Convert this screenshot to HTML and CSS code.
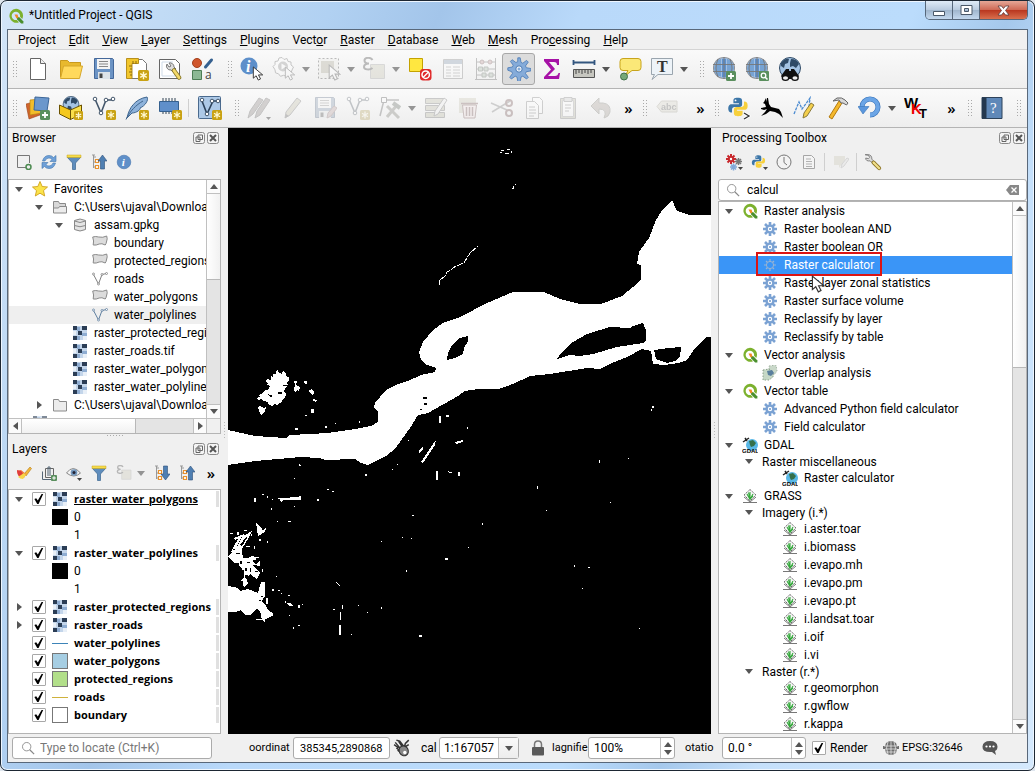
FILE: index.html
```html
<!DOCTYPE html>
<html lang="en">
<head>
<meta charset="utf-8">
<title>*Untitled Project - QGIS</title>
<link rel="stylesheet" href="styles.css">
</head>
<body>
<svg class="defs" width="0" height="0" aria-hidden="true">
<defs>
<symbol id="qgis" viewBox="0 0 16 16"><path d="M8 .8a7 7 0 1 0 3 13.500l-2.200-2.300A4.200 4.200 0 1 1 12 8.800l2.300 2.100A7 7 0 0 0 8 .8z" fill="#7cb12e"/><path d="M9 9l2.400.2 4 4.300v2h-2.300L9.200 11.500z" fill="#4a8f2e"/><path d="M6.500 6.500h3l1 3-2 1z" fill="#f08a24"/></symbol>
<symbol id="star6" viewBox="0 0 10 10"><rect width="10" height="10" rx="1.500" fill="#c9a213"/><path d="M5 1.500v7M2 3.200l6 3.600M8 3.200L2 6.800" stroke="#fff8d0" stroke-width="1.300"/></symbol>
<symbol id="plus" viewBox="0 0 10 10"><rect width="10" height="10" rx="1.500" fill="#5a8f5e"/><path d="M5 2v6M2 5h6" stroke="#fff" stroke-width="1.800"/></symbol>
<symbol id="arrowcur" viewBox="0 0 12 16"><path d="M1 1v12l3-2.600L6.300 15l2.400-1.200L6.500 9.500H11z" fill="#fff" stroke="#333" stroke-width="1"/></symbol>
<symbol id="new" viewBox="0 0 24 24"><path d="M4.500 1.500h10l5 5v16h-15z" fill="#fff" stroke="#666"/><path d="M14.500 1.500v5h5" fill="#eee" stroke="#666"/></symbol>
<symbol id="open" viewBox="0 0 24 24"><path d="M1.500 20V3.500h7l2 2h11V9" fill="#e8b92e" stroke="#c99a1e"/><path d="M1.500 21.500l3-12.500h19l-3 12.500z" fill="#ffd95c" stroke="#d6a72a"/></symbol>
<symbol id="save" viewBox="0 0 24 24"><path d="M2.500 1.500h18l1 1v19h-19z" fill="#6b93c4" stroke="#44689a"/><path d="M5 2h13v10H5z" fill="#f4f4f4"/><path d="M7 4.500h9M7 7h9M7 9.500h9" stroke="#888"/><path d="M6 15h12v7H6z" fill="#dde3e8"/><path d="M7.500 16.500h3V21h-3z" fill="#444"/></symbol>
<symbol id="layout" viewBox="0 0 24 24"><path d="M2.500 2.500h15l4 4v15h-19z" fill="#fff" stroke="#777"/><path d="M1.500 1.500h12v5H7v15H1.500z" fill="#f2c62c" stroke="#b8901c"/><path d="M4 9h3M5 12h2M4 15h3M5 18h2M8 4v3M11 4v3" stroke="#8a6a10"/><use href="#star6" x="13" y="13" width="11" height="11"/></symbol>
<symbol id="wrenchdoc" viewBox="0 0 24 24"><path d="M1.500 2.500h16l4 4v15h-20z" fill="#fff" stroke="#666"/><path d="M4 5h11M4 5v14h13" stroke="#cfdbe8" fill="none"/><path d="M9 7a4 4 0 0 0 4 6l2 2 3-3-2-2a4 4 0 0 0-5-4l2 3-2 1z" fill="#ddd" stroke="#777"/><path d="M16 13.500l5 7" stroke="#8a7a2a" stroke-width="4.500" stroke-linecap="round"/><path d="M16 13.500l5 7" stroke="#f3d96a" stroke-width="2.800" stroke-linecap="round"/></symbol>
<symbol id="style" viewBox="0 0 24 24"><circle cx="6" cy="6" r="4.500" fill="#d0562c" stroke="#a3401c"/><path d="M14.500 10l6-7" stroke="#35608f" stroke-width="3" stroke-linecap="round"/><path d="M1.500 13.500h9v9h-9z" fill="#8cb894" stroke="#4d7d55"/><text x="14" y="22" font-size="12" fill="#444" font-family="Open Sans">a</text></symbol>
<symbol id="ident" viewBox="0 0 24 24"><circle cx="9" cy="9" r="8.500" fill="#5d8fca"/><text x="6" y="15" font-size="16" font-style="italic" font-weight="bold" font-family="Liberation Serif" fill="#fff">i</text><use href="#arrowcur" x="12" y="9" width="12" height="15"/></symbol>
<symbol id="gear" viewBox="0 0 24 24"><path d="M10.800.8h2.400l.8 4.600 1.800.8 3.800-2.800 1.700 1.700-2.800 3.800.8 1.800 4.600.8v2.400l-4.600.8-.8 1.800 2.800 3.800-1.700 1.700-3.800-2.800-1.800.8-.8 4.600h-2.400l-.8-4.600-1.800-.8-3.800 2.800-1.700-1.700 2.800-3.800-.8-1.800L.8 13.200v-2.400l4.600-.8.800-1.800-2.800-3.800 1.700-1.700 3.800 2.800 1.800-.8z" fill="#85abd9" stroke="#4779b5" stroke-width=".8"/><circle cx="12" cy="12" r="3.200" fill="#f2f5f9" stroke="#4779b5"/><circle cx="12" cy="12" r="1.500" fill="#85abd9"/></symbol>
<symbol id="gearact" viewBox="0 0 24 24"><path d="M10 .5l2 2 3-1 1 3 3 .5v3l2.500 2-1.500 3-1 3-3 .8-1.500 2.500-3-1-3 1-2-2.500-3-1-.5-3L1 9.500l2-2V4.500L6 4l1-3z" fill="#fff" stroke="#555"/><circle cx="11" cy="9.500" r="5" fill="#888"/><path d="M9.500 6.500l5 3-5 3z" fill="#fff"/><use href="#arrowcur" x="12" y="9" width="12" height="15"/></symbol>
<symbol id="select" viewBox="0 0 24 24"><path d="M1.500 1.500h20v20h-20z" fill="#e9e9e0" stroke="#333" stroke-dasharray="2 2"/><path d="M4 4h13v12H4z" fill="#a8a078"/><use href="#arrowcur" x="11" y="7" width="13" height="17"/></symbol>
<symbol id="eps" viewBox="0 0 24 24"><path d="M8.500 7.500h14v14h-14z" fill="#c9c59d" stroke="#999"/><path d="M10.500 3C9 0 2.500 0 2.500 3.500 2.500 6 5 6.500 7 6.500 4.500 6.500 2 7.500 2 10s5.500 3.500 8.500 1" fill="none" stroke="#333" stroke-width="2"/></symbol>
<symbol id="desel" viewBox="0 0 24 24"><path d="M1.500 1.500h13v13h-13z" fill="#ffe740" stroke="#c4a200"/><rect x="12" y="12" width="11.500" height="11.500" rx="3" fill="#e02a2a"/><circle cx="17.700" cy="17.700" r="3.700" fill="none" stroke="#fff" stroke-width="1.500"/><path d="M15 20.500l5.500-5.500" stroke="#fff" stroke-width="1.500"/></symbol>
<symbol id="table" viewBox="0 0 24 24"><path d="M2.500 2.500h19v19h-19z" fill="#fff" stroke="#777"/><path d="M3 3h18v4H3z" fill="#6b93c4"/><path d="M5 10h5M12 10h7M5 13h5M12 13h7M5 16h5M12 16h7M5 19h5M12 19h7" stroke="#888"/></symbol>
<symbol id="abacus" viewBox="0 0 24 24"><path d="M2.500 1v22M21.500 1v22M2 5h20M2 12h20M2 18h20M1 22.500h22" stroke="#555"/><circle cx="8" cy="5" r="2" fill="#d88" stroke="#844"/><circle cx="16" cy="5" r="2" fill="#d88" stroke="#844"/><path d="M4.500 10h4v4h-4zM10 10h4v4h-4zM8 16h4v4H8zM15 16h4v4h-4z" fill="#9b9" stroke="#565"/></symbol>
<symbol id="sigma" viewBox="0 0 24 24"><path d="M4 2h15v6h-2c0-2-1-3-3-3H9l6 7-7 7h7c2 0 3-1 3.500-3H20l-1 6H4v-2l7-7.500L4 4z" fill="#a612a6"/></symbol>
<symbol id="ruler" viewBox="0 0 24 24"><path d="M1 5.500h22M1.500 3v5M22.500 3v5" stroke="#33567f" stroke-width="1.800"/><path d="M1.500 12.500h21v8h-21z" fill="#c7c7c0" stroke="#555"/><path d="M4 13v4M7 13v3M10 13v4M13 13v3M16 13v4M19 13v3" stroke="#444"/></symbol>
<symbol id="tip" viewBox="0 0 24 24"><path d="M5 1.500h15q3 0 3 3v6q0 3-3 3h-6L7 19l3-5.500H5q-3 0-3-3v-6q0-3 3-3z" fill="#fbe878" stroke="#c8a41c"/><circle cx="6" cy="19.500" r="3.500" fill="#76a878" stroke="#41704a"/></symbol>
<symbol id="textann" viewBox="0 0 24 24"><path d="M1.500 1.500h21v16H8L2 22.500l2.500-5h-3z" fill="#edf3f8" stroke="#9aa5ae"/><text x="7" y="15" font-size="16" font-family="Liberation Serif" font-weight="bold" fill="#333">T</text></symbol>
<symbol id="globe" viewBox="0 0 24 24"><circle cx="12" cy="11" r="11" fill="#8b8f96"/><circle cx="12" cy="11" r="10" fill="#e6edf5"/><path d="M5 3.500C1 9 1 14 5 18.500L9 20V1.500zM19 3.500c4 5.500 4 10 0 15L15 20V1.500z" fill="#77a3d3"/><path d="M9.500 1.500h5v19h-5z" fill="#5e92cf"/><path d="M1 7.500h22M1 14.500h22M12 0v22M6 2q-4 9 0 18M18 2q4 9 0 18" fill="none" stroke="#777" stroke-width=".9"/></symbol>
<symbol id="globeadd" viewBox="0 0 24 24"><use href="#globe" width="24" height="24"/><use href="#plus" x="14" y="14" width="10" height="10"/></symbol>
<symbol id="globefind" viewBox="0 0 24 24"><use href="#globe" width="24" height="24"/><rect x="14" y="14" width="10" height="10" rx="1" fill="#5a8f5e"/><circle cx="18.500" cy="18.500" r="2.300" fill="none" stroke="#fff" stroke-width="1.300"/><path d="M20 20l2.500 2.500" stroke="#fff" stroke-width="1.500"/></symbol>
<symbol id="earth" viewBox="0 0 24 24"><circle cx="12" cy="11" r="10.500" fill="#a4c3e3" stroke="#2f4a66"/><path d="M3 6q4-5 8-4l-1 4-3 1-1 4-3-2zM13 2q6 0 8 5l-3 4-3-2-3 1 0-4zM8 13l4 1 1 3-3 4-3-4z" fill="#2f4a66"/></symbol>
<symbol id="binoc" viewBox="0 0 24 24"><use href="#earth" width="24" height="24"/><path d="M8 12h3v2h2v-2h3l5 7-2 3H5l-2-3z" fill="#111"/><ellipse cx="7.500" cy="21" rx="3.200" ry="2.300" fill="#eee" stroke="#111" stroke-width="1.300"/><ellipse cx="17" cy="21" rx="3.200" ry="2.300" fill="#eee" stroke="#111" stroke-width="1.300"/></symbol>
<symbol id="dsm" viewBox="0 0 24 24"><path d="M0 8l11-3 3 14-11 4z" fill="#d0642c" stroke="#9c4518" stroke-width=".6"/><path d="M4 4l10-1 2 14-12 2z" fill="#f2bd2a" stroke="#b98512" stroke-width=".7"/><path d="M9 1l14 1-2 13-13-1z" fill="#6b97cc" stroke="#3c6698"/><use href="#plus" x="14" y="14" width="10" height="10"/></symbol>
<symbol id="gpkg" viewBox="0 0 24 24"><use href="#earth" x="3" y="0" width="18" height="18"/><path d="M.5 9l11 5v9.500L.5 18z" fill="#f4c81e" stroke="#6b5200"/><path d="M11.500 14l11-5v9l-11 5.500z" fill="#fadf4c" stroke="#6b5200"/><use href="#star6" x="15" y="15" width="9" height="9"/></symbol>
<symbol id="vec" viewBox="0 0 24 24"><path d="M3 3l6 14 5-13h7" fill="none" stroke="#43566b" stroke-width="1.600"/><g fill="#fff" stroke="#43566b"><circle cx="3" cy="3" r="1.800"/><circle cx="9" cy="17" r="1.800"/><circle cx="14" cy="4" r="1.800"/><circle cx="21" cy="3" r="1.800"/></g></symbol>
<symbol id="vecnew" viewBox="0 0 24 24"><use href="#vec" width="24" height="24"/><use href="#star6" x="14" y="14" width="10" height="10"/></symbol>
<symbol id="feather" viewBox="0 0 24 24"><path d="M2 22C4 12 10 3 22 1c2 3-2 9-7 11 1 1-3 5-8 5z" fill="#8db2db" stroke="#3f658e"/><path d="M1 23.500C5 15 11 9 18 5" stroke="#3f658e" fill="none"/><use href="#star6" x="14" y="14" width="10" height="10"/></symbol>
<symbol id="chip" viewBox="0 0 24 24"><path d="M5 2v16M8 2v16M11 2v16M14 2v16M17 2v16" stroke="#345"/><path d="M1.500 5.500h19v10h-19z" fill="#5f8fca" stroke="#35608f"/><use href="#star6" x="14" y="14" width="10" height="10"/></symbol>
<symbol id="virt" viewBox="0 0 24 24"><rect x=".5" y=".5" width="22" height="22" rx="1" fill="#adc9e7" stroke="#4a6a8e"/><path d="M4 5l5 13 6-13h5" fill="none" stroke="#2d425a" stroke-width="1.600"/><g fill="#fff" stroke="#43566b"><circle cx="4" cy="4" r="1.800"/><circle cx="9" cy="18" r="1.800"/><circle cx="14" cy="5" r="1.800"/><circle cx="20" cy="5" r="1.800"/></g><use href="#star6" x="14" y="14" width="10" height="10"/></symbol>
<symbol id="pencil" viewBox="0 0 24 24"><path d="M5 22l1-6L17 2l4 3L10 19z" fill="#c5bd8c" stroke="#666"/><path d="M5 22l1-4 3 2z" fill="#555"/></symbol>
<symbol id="pencils" viewBox="0 0 24 24"><path d="M1 22l2-7L12 2l4 2L6 18zM8 22l2-7L19 2l4 2L13 19z" fill="#8a7b76" stroke="#555"/><path d="M19 21h5l-2.500 3z" fill="#000"/></symbol>
<symbol id="saveed" viewBox="0 0 24 24"><use href="#save" width="24" height="24"/><path d="M14 22l1-5 6-7 3 2-6 8z" fill="#c99" stroke="#966"/></symbol>
<symbol id="node" viewBox="0 0 24 24"><path d="M2 20L6 4h15" fill="none" stroke="#555" stroke-width="1.500"/><path d="M3.500 1.500h5v5h-5z" fill="#fff" stroke="#444"/><path d="M9 21L19 9M9 10l12 12" stroke="#776" stroke-width="3"/><path d="M15 7l7 5" stroke="#565" stroke-width="4"/></symbol>
<symbol id="rows" viewBox="0 0 24 24"><path d="M1.500 2.500h19v5h-19zM1.500 9.500h19v5h-19zM1.500 16.500h19v5h-19z" fill="#bbb98f" stroke="#666"/><path d="M10 20l1-5L20 2l3 2-9 14z" fill="#eee" stroke="#666"/></symbol>
<symbol id="trash" viewBox="0 0 24 24"><path d="M2 2h17v15H2z" fill="#c9c4a0"/><path d="M5.500 9h14l-1.500 13H7z" fill="#fdd" stroke="#844"/><path d="M4 7.500h17M9.500 11v9M12.500 11v9M15.500 11v9" stroke="#844" stroke-width="1.500"/></symbol>
<symbol id="cut" viewBox="0 0 24 24"><path d="M1 7l16 7M2 16L20 5" stroke="#777" stroke-width="1.600"/><g fill="none" stroke="#844" stroke-width="2"><circle cx="19" cy="7" r="3"/><circle cx="19" cy="17" r="3"/></g></symbol>
<symbol id="copy" viewBox="0 0 24 24"><path d="M9.500 1.500h7l3 3v13h-10z" fill="#fff" stroke="#777"/><path d="M3.500 5.500h8l4 4v13h-12z" fill="#fff" stroke="#777"/><path d="M6 11h6M6 14h7M6 17h7M6 20h5" stroke="#777"/></symbol>
<symbol id="paste" viewBox="0 0 24 24"><path d="M4.500 2.500h15v20h-15z" fill="#bbb98f" stroke="#777"/><path d="M6.500 4.500h11v16h-11z" fill="#fff" stroke="#999"/><path d="M8 1.500h8v4H8z" fill="#ccc" stroke="#777"/><path d="M9 9h6M9 12h6M9 15h4" stroke="#777"/></symbol>
<symbol id="undo" viewBox="0 0 24 24"><path d="M10 2v5h4q8 1 7 9-1 5-6 6 4-9-5-9v5L2 10z" fill="#a98" stroke="#776"/></symbol>
<symbol id="abc" viewBox="0 0 24 24"><path d="M2 10.500L6.500 5H22v11H6.500z" fill="#d8d3b8" stroke="#a09a7c"/><text x="6" y="13.500" font-size="9" font-weight="bold" font-family="Liberation Sans" fill="#555">abc</text></symbol>
<symbol id="py" viewBox="0 0 24 24"><path d="M12 2c-5 0-5 1.500-5 4v2h6v1H5c-3 0-4 3-3.500 6 .5 2.500 2 3 4 3V15q0-3 3-3h5q3 0 3-3V6c0-3-1-4-4.500-4z" fill="#3c76a8"/><path d="M12 22c5 0 5-1.500 5-4v-2h-6v-1h8c3 0 3.500-2 3.500-5 0-2.500-1-4-4-4v3q0 3-3 3h-5q-3 0-3 3v3c0 3 1 4 4.500 4z" fill="#f7d03c"/><circle cx="9.300" cy="4.800" r="1" fill="#fff"/></symbol>
<symbol id="pycon" viewBox="0 0 24 24"><use href="#py" x="0" y="0" width="22" height="22"/><path d="M17 17l5 3-5 3" fill="none" stroke="#fff" stroke-width="3"/><path d="M17 17l5 3-5 3" fill="none" stroke="#333" stroke-width="1.300"/></symbol>
<symbol id="deer" viewBox="0 0 24 24"><path d="M6 2l1 4 0-4h1l1 6 2 3 8 2 2 3 2 6-4-4-4-2-5-1-4 3-5 2 4-4 2-3-3 1-3-1v-1l5-1-1-3-2-1 1-1z" fill="#000"/></symbol>
<symbol id="adv" viewBox="0 0 24 24"><path d="M1 18l5-12 3 7 8-11-1 9" fill="none" stroke="#4a8ad0" stroke-dasharray="3 1" stroke-width="1.300"/><path d="M10 22l1-5 7-10 3 2-7 11z" fill="#f4cf4c" stroke="#8a7a3a"/></symbol>
<symbol id="hammer" viewBox="0 0 24 24"><path d="M13 5L3 21l3 2 10-16z" fill="#f4b82c" stroke="#b37a0e"/><path d="M7 5l4-3q5-1 8 2l3 3-1.500 2-3.500-2-2 0-2-3z" fill="#d8d8d8" stroke="#666"/></symbol>
<symbol id="reload" viewBox="0 0 24 24"><path d="M4 11A8 8 0 1 1 12 19" fill="none" stroke="#3873b9" stroke-width="5"/><path d="M4 11A8 8 0 1 1 12 19" fill="none" stroke="#6ba5e6" stroke-width="3.800"/><path d="M0 10.500h11L5 18z" fill="#5b97dd" stroke="#3873b9" stroke-width=".6"/></symbol>
<symbol id="wkt" viewBox="0 0 24 24"><g font-family="Liberation Sans" font-weight="bold"><text x="0" y="12" font-size="15" fill="#000">W</text><text x="7" y="18" font-size="15" fill="#e00">K</text><text x="15" y="22" font-size="13" fill="#000">T</text></g></symbol>
<symbol id="help" viewBox="0 0 24 24"><path d="M2 1.500h20v21H2z" fill="#5f88b8" stroke="#2d425a"/><path d="M2 1.500h4.500v21H2z" fill="#24384f"/><text x="10" y="17" font-size="15" font-family="Liberation Serif" fill="#fff">?</text></symbol>
<symbol id="addlay" viewBox="0 0 16 16"><path d="M11 13.500H1.500v-12h12V9" fill="none" stroke="#777"/><circle cx="12.500" cy="13" r="2.500" fill="#eee" stroke="#4c8a50" stroke-width="1.500"/></symbol>
<symbol id="refresh" viewBox="0 0 16 16"><path d="M1.500 7Q3 1.500 8 1.500q3 0 4.500 2L15 1.500v6H9l2-2q-1-1.500-3-1.500-3 0-4 3zM14.500 9q-1.500 5.500-6.500 5.500-3 0-4.500-2L1 14.500v-6h6l-2 2q1 1.500 3 1.500 3 0 4-3z" fill="#6fa0d8" stroke="#3f75ad" stroke-width=".6"/></symbol>
<symbol id="funnel" viewBox="0 0 16 16"><path d="M1 3h14L9.500 9v6.500h-3V9z" fill="#5f8dbd" stroke="#3b658f" stroke-width=".7"/><path d="M1 1h14v2.500H1z" fill="#f6dc4a" stroke="#c9a51e" stroke-width=".5"/></symbol>
<symbol id="coll" viewBox="0 0 16 16"><path d="M2.500 1v13M2.500 3H5M2.500 8H5M2.500 13H5M1 1h3" stroke="#999" fill="none"/><path d="M4.500 5.500h3v3h-3zM4.500 11.500h3v3h-3z" fill="#fff" stroke="#e8912c" stroke-width="1.200"/><path d="M9.500 15V7H7l4.500-6L16 7h-2.500v8z" fill="#4f7fb2" stroke="#2d4f78" stroke-width=".6"/></symbol>
<symbol id="expand" viewBox="0 0 16 16"><path d="M2.500 1v13M2.500 3H5M2.500 8H5M2.500 13H5M1 1h3" stroke="#999" fill="none"/><path d="M4.500 5.500h3v3h-3zM4.500 11.500h3v3h-3z" fill="#fff" stroke="#e8912c" stroke-width="1.200"/><path d="M9.500 1v8H7l4.500 6L16 9h-2.500V1z" fill="#4f7fb2" stroke="#2d4f78" stroke-width=".6"/></symbol>
<symbol id="info" viewBox="0 0 16 16"><circle cx="8" cy="8" r="6.800" fill="#5f8fc8" stroke="#4474ad" stroke-width=".6"/><text x="5.800" y="12" font-size="11" font-style="italic" font-weight="bold" font-family="Liberation Serif" fill="#fff">i</text></symbol>
<symbol id="star" viewBox="0 0 16 16"><path d="M8 .5l2.200 5 5.300.5-4 3.600 1.200 5.400L8 12.200 3.300 15l1.200-5.400L.5 6l5.300-.5z" fill="#fbe34a" stroke="#d0a21c" stroke-width=".9"/></symbol>
<symbol id="folder" viewBox="0 0 16 16"><path d="M1.500 14V2.500h5l1 2h7V14z" fill="#ececec" stroke="#8a8a8a"/></symbol>
<symbol id="folderopen" viewBox="0 0 16 16"><path d="M1.500 12V2.500h5l1 2h6V7" fill="#d8d8d8" stroke="#8a8a8a"/><path d="M1.500 14V9h5l1-1.500h7V14z" fill="#ececec" stroke="#8a8a8a"/></symbol>
<symbol id="db" viewBox="0 0 16 16"><path d="M2.500 3.500v9q5.500 3 11 0v-9q-5.500-3-11 0z" fill="#e4e4e4" stroke="#888"/><path d="M2.500 4q5.500 3 11 0M2.500 8.500q5.500 2.500 11 0" fill="none" stroke="#888"/></symbol>
<symbol id="poly" viewBox="0 0 16 16"><path d="M.7 2q3-1 6 0 4 1 8-1 1 3 0 5-.5 3-1.500 4-3.500-2-6-1-3 1.500-6 1 1-4-.5-8z" fill="#dcdcdc" stroke="#8a8a8a"/></symbol>
<symbol id="line" viewBox="0 0 16 16"><path d="M1.500 3.500l5 9.500L10 3.500l4.500-1" fill="none" stroke="#808080"/><g fill="#fff" stroke="#808080" stroke-width=".8"><circle cx="1.500" cy="3" r="1"/><circle cx="6.500" cy="13" r="1"/><circle cx="10" cy="3.500" r="1"/><circle cx="14.500" cy="2.500" r="1"/></g></symbol>
<symbol id="lineblue" viewBox="0 0 16 16"><path d="M1.500 3.500l5 9.500L10 3.500l4.500-1" fill="none" stroke="#5f7f9f"/><g fill="#fff" stroke="#5f7f9f" stroke-width=".8"><circle cx="1.500" cy="3" r="1"/><circle cx="6.500" cy="13" r="1"/><circle cx="10" cy="3.500" r="1"/><circle cx="14.500" cy="2.500" r="1"/></g></symbol>
<symbol id="raster" viewBox="0 0 14 14"><path d="M0 0h14v14H0z" fill="#c3d5ea"/><path d="M0 0h4v4H0zM9 0h5v4H9zM5 5h4v4H5zM0 10h4v4H0z" fill="#2b3d55"/><path d="M4 1h3v4H4zM9 7h5v3H9zM4 10h3v4H4z" fill="#8fadd2"/><path d="M0 5h3v4H0zM10 10h4v4h-4z" fill="#e8eff7"/></symbol>
<symbol id="minigear" viewBox="0 0 16 16"><g stroke="#7ba2d3" stroke-width="2.600"><path d="M8 1v14M1 8h14M3 3l10 10M13 3L3 13"/></g><circle cx="8" cy="8" r="4.600" fill="#7ba2d3"/><circle cx="8" cy="8" r="2.200" fill="#fff"/><circle cx="8" cy="8" r="1" fill="#6a95ca"/></symbol>
<symbol id="gearsel" viewBox="0 0 16 16"><g stroke="#9ab4d2" stroke-width="1.200"><path d="M8 2v12M2 8h12M4 4l8 8M12 4l-8 8"/></g><circle cx="8" cy="8" r="3.600" fill="#3a95f7" stroke="#9ab4d2"/></symbol>
<symbol id="overlap" viewBox="0 0 16 16"><path d="M7 1l7-1 1 6-3 4-5-2z" fill="#c9d8c9" stroke="#a5b5a5" stroke-dasharray="1.500 1.500"/><path d="M1 5l6-1 4 3v5l-4 3-6 0z" fill="#c6d8c6" stroke="#8aa08a" stroke-dasharray="1.500 1.500"/><path d="M5 6l5-1 2 3-3 3-3-1z" fill="#5a7f9d"/></symbol>
<symbol id="gdal" viewBox="0 0 16 16"><circle cx="10" cy="8" r="6" fill="#58b7e6"/><path d="M7 4l4-1 3 3-2 3-3 1-1-2z" fill="#35704a"/><path d="M1 5l6-4M3 1l2 3" stroke="#222" stroke-width="1.500"/><text x="0" y="15.500" font-size="6" font-weight="bold" font-family="Liberation Sans" fill="#000">GDAL</text></symbol>
<symbol id="grass" viewBox="0 0 16 16"><path d="M8 1.500l6 5.500-6 6-6-6z" fill="#f7f7f7" stroke="#666" stroke-dasharray="1.500 .8"/><path d="M2 9l6 5 6-5M1 14.500h14" fill="none" stroke="#777"/><path d="M8 12V4M8 11.500L5 6M8 11.500L11 6M8 11L6.500 4.500M8 11l3-3" stroke="#35a83c" stroke-width="1.100"/></symbol>
<symbol id="gears" viewBox="0 0 18 18"><g stroke="#c8282c" stroke-width="2"><path d="M6 1v10M1 6h10M2.500 2.500l7 7M9.500 2.500l-7 7"/></g><circle cx="6" cy="6" r="3" fill="#c8282c"/><circle cx="6" cy="6" r="1.200" fill="#fff"/><g stroke="#777" stroke-width="1.500"><path d="M13.500 5v7M10 8.500h7M11 6l5 5M16 6l-5 5"/></g><g stroke="#83a9d8" stroke-width="1.500"><path d="M8.500 10.500v7M5 14h7M6 11.500l5 5M11 11.500l-5 5"/></g><path d="M13 14h5l-2.500 3z" fill="#444"/></symbol>
<symbol id="pymenu" viewBox="0 0 18 18"><use href="#py" x="1" y="1" width="15" height="15"/><path d="M13 14h5l-2.500 3z" fill="#444"/></symbol>
<symbol id="clock" viewBox="0 0 16 16"><circle cx="8" cy="8" r="7" fill="#f3f3f3" stroke="#777"/><path d="M8 3v5.500l3 2.500" fill="none" stroke="#777"/></symbol>
<symbol id="doc" viewBox="0 0 16 16"><path d="M2.500 1.500h8l3 3v10h-11z" fill="#f7f7f7" stroke="#888"/><path d="M5 5h5M5 7.500h6M5 10h6M5 12.500h6" stroke="#999"/></symbol>
<symbol id="editb" viewBox="0 0 16 16"><path d="M1 2h11v9H8l-2 3v-3H1z" fill="#c9c4a0"/><path d="M8 14l1-4 5-6 2 1-5 7z" fill="#ddd" stroke="#999"/></symbol>
<symbol id="wrench" viewBox="0 0 16 16"><path d="M1 1.500l3 .5 1 2-1 1-2.500-.5q0 3 4 2.500l2 2 1.500-1.500-2-2q0-4-3.500-4z" fill="#ddd" stroke="#777" stroke-width=".8"/><path d="M8.500 8.500l5 5" stroke="#8a7020" stroke-width="3.500" stroke-linecap="round"/><path d="M8.500 8.500l5 5" stroke="#f0df8a" stroke-width="2" stroke-linecap="round"/></symbol>
<symbol id="brush" viewBox="0 0 16 16"><path d="M8 9l6-7 1.500 1.500L10 11z" fill="#f2b83a" stroke="#b37a1a" stroke-width=".6"/><path d="M1 6l4-1 5 4-2 4q-6 1-7-7z" fill="#f0783c"/><path d="M1 5l4 1 2 3-3 3q-3-2-3-7z" fill="#e03c3c"/><path d="M2 12l6-4 2 2-3 4q-3 0-5-2z" fill="#f8d648"/></symbol>
<symbol id="group" viewBox="0 0 16 16"><path d="M4.500 3.500h8v9h-8z" fill="none" stroke="#666"/><path d="M1.500 6.500v8h9M7 2v9M7 2h2v9" fill="none" stroke="#567"/><use href="#plus" x="10" y="10" width="6" height="6"/></symbol>
<symbol id="eye" viewBox="0 0 16 16"><path d="M.5 8Q7-1 14.500 8 8 14 .5 8z" fill="#f4f4f4" stroke="#888"/><circle cx="8" cy="7.500" r="3.300" fill="#7397bd"/><circle cx="8" cy="7.500" r="1.500" fill="#223"/><path d="M11 13h5l-2.500 3z" fill="#444"/></symbol>
<symbol id="float" viewBox="0 0 12 12"><rect x=".5" y=".5" width="11" height="11" rx="2" fill="#f4f4f4" stroke="#888"/><path d="M5 3h4.500v4.500H5zM3 5h4v4.500H3z" fill="#f4f4f4" stroke="#666"/></symbol>
<symbol id="close" viewBox="0 0 12 12"><rect x=".5" y=".5" width="11" height="11" rx="2" fill="#f4f4f4" stroke="#888"/><path d="M3 3l6 6M9 3L3 9" stroke="#555" stroke-width="2"/></symbol>
<symbol id="lens" viewBox="0 0 16 16"><circle cx="6.500" cy="6.500" r="4.800" fill="none" stroke="#888"/><path d="M10 10l5 5" stroke="#888" stroke-width="1.400"/></symbol>
<symbol id="mouse" viewBox="0 0 16 16"><path d="M3 1l3 1 4 5 1-3 3-3M1 5l4 3M2 3l5 6M5 2l4 6M3 8l4 3M4 10l3 2M9 8l5-3" stroke="#333" stroke-width="1.300" fill="none"/><ellipse cx="9.500" cy="10.500" rx="4" ry="4.500" transform="rotate(-30 9.500 10.500)" fill="#888" stroke="#333"/><circle cx="10.500" cy="12" r="1.500" fill="#fff"/></symbol>
<symbol id="lock" viewBox="0 0 14 16"><path d="M3.500 8V4.500q0-3.500 3.500-3.500t3.500 3.500V8" fill="none" stroke="#777" stroke-width="1.500"/><rect x="1" y="7" width="12" height="8.500" rx="1" fill="#5a5a5a"/></symbol>
<symbol id="crs" viewBox="0 0 16 16"><path d="M3 3q5-4 10 0l1 3h2v3h-2l-1 4q-5 4-10 0L2 9H0V6h2z" fill="#6f6f6f"/><path d="M1 6h14M2 9h12M3 12h10M8 1v14M5 2q-3 6 0 12M11 2q3 6 0 12" fill="none" stroke="#f0f0f0" stroke-width=".7"/></symbol>
<symbol id="chat" viewBox="0 0 16 16"><path d="M8 1q7 0 7.500 5.500Q15.500 10 13 11l1 4-4-3Q0 12.500.5 6.500 1 1 8 1z" fill="#555"/><g fill="#fff"><circle cx="4.500" cy="6.500" r="1.100"/><circle cx="8" cy="6.500" r="1.100"/><circle cx="11.500" cy="6.500" r="1.100"/></g></symbol>
</defs>
</svg>

<div class="window">
<header class="titlebar">
  <svg class="i16"><use href="#qgis"/></svg>
  <h1 class="title">*Untitled Project - QGIS</h1>
  <div class="winbtns">
    <button class="wb" aria-label="Minimize"><svg viewBox="0 0 13 11"><path d="M.5 6.500h11v4H.5z" fill="#fff" stroke="#4a5868"/></svg></button>
    <button class="wb" aria-label="Maximize"><svg viewBox="0 0 13 11"><path d="M1 .5h11v9H1zM4.500 3.500v3h4v-3z" fill="#fff" fill-rule="evenodd" stroke="#4a5868"/></svg></button>
    <button class="wb wb-close" aria-label="Close"><svg viewBox="0 0 13 11"><path d="M1 1h3.500L6.500 3.500 8.500 1H12L8.500 5.500 12 10H8.500L6.500 7.500 4.500 10H1l3.500-4.500z" fill="#fff" stroke="#5b3a3a" stroke-width=".8"/></svg></button>
  </div>
</header>

<div class="client">
<nav class="menubar">
  <button>Pro<u>j</u>ect</button><button><u>E</u>dit</button><button><u>V</u>iew</button><button><u>L</u>ayer</button><button><u>S</u>ettings</button><button><u>P</u>lugins</button><button>Vect<u>o</u>r</button><button><u>R</u>aster</button><button><u>D</u>atabase</button><button><u>W</u>eb</button><button><u>M</u>esh</button><button>Pro<u>c</u>essing</button><button><u>H</u>elp</button>
</nav>

<div class="toolbar">
  <i class="grip grip-first"></i>
  <button class="tb" aria-label="New"><svg><use href="#new"/></svg></button>
  <button class="tb" aria-label="Open"><svg><use href="#open"/></svg></button>
  <button class="tb" aria-label="Save"><svg><use href="#save"/></svg></button>
  <button class="tb" aria-label="New layout"><svg><use href="#layout"/></svg></button>
  <button class="tb" aria-label="Layout manager"><svg><use href="#wrenchdoc"/></svg></button>
  <button class="tb" aria-label="Style manager"><svg><use href="#style"/></svg></button>
  <i class="grip"></i>
  <button class="tb" aria-label="Identify"><svg><use href="#ident"/></svg></button>
  <button class="tb off drop" aria-label="Run action"><svg><use href="#gearact"/></svg></button>
  <button class="tb off drop" aria-label="Select"><svg><use href="#select"/></svg></button>
  <button class="tb off drop" aria-label="Select by expression"><svg><use href="#eps"/></svg></button>
  <button class="tb" aria-label="Deselect"><svg><use href="#desel"/></svg></button>
  <button class="tb off" aria-label="Attribute table"><svg><use href="#table"/></svg></button>
  <button class="tb off" aria-label="Field calculator"><svg><use href="#abacus"/></svg></button>
  <button class="tb on" aria-label="Toolbox"><svg><use href="#gear"/></svg></button>
  <button class="tb" aria-label="Statistics"><svg><use href="#sigma"/></svg></button>
  <button class="tb drop" aria-label="Measure"><svg><use href="#ruler"/></svg></button>
  <button class="tb" aria-label="Map tips"><svg><use href="#tip"/></svg></button>
  <button class="tb drop" aria-label="Text annotation"><svg><use href="#textann"/></svg></button>
  <i class="grip"></i>
  <button class="tb" aria-label="Add web layer"><svg><use href="#globeadd"/></svg></button>
  <button class="tb" aria-label="Search web layers"><svg><use href="#globefind"/></svg></button>
  <button class="tb" aria-label="Catalog search"><svg><use href="#binoc"/></svg></button>
</div>

<div class="toolbar">
  <i class="grip grip-first"></i>
  <button class="tb" aria-label="Data sources"><svg><use href="#dsm"/></svg></button>
  <button class="tb" aria-label="New GeoPackage"><svg><use href="#gpkg"/></svg></button>
  <button class="tb" aria-label="New shapefile"><svg><use href="#vecnew"/></svg></button>
  <button class="tb" aria-label="New SpatiaLite"><svg><use href="#feather"/></svg></button>
  <button class="tb" aria-label="New memory layer"><svg><use href="#chip"/></svg></button>
  <i class="vsep"></i>
  <button class="tb" aria-label="New virtual layer"><svg><use href="#virt"/></svg></button>
  <i class="grip"></i>
  <button class="tb off" aria-label="Current edits"><svg><use href="#pencils"/></svg></button>
  <button class="tb off" aria-label="Toggle editing"><svg><use href="#pencil"/></svg></button>
  <button class="tb off" aria-label="Save edits"><svg><use href="#saveed"/></svg></button>
  <button class="tb off" aria-label="Add feature"><svg><use href="#vecnew"/></svg></button>
  <button class="tb off drop" aria-label="Vertex tool"><svg><use href="#node"/></svg></button>
  <button class="tb off" aria-label="Modify attributes"><svg><use href="#rows"/></svg></button>
  <button class="tb off" aria-label="Delete"><svg><use href="#trash"/></svg></button>
  <button class="tb off" aria-label="Cut"><svg><use href="#cut"/></svg></button>
  <button class="tb off" aria-label="Copy"><svg><use href="#copy"/></svg></button>
  <button class="tb off" aria-label="Paste"><svg><use href="#paste"/></svg></button>
  <button class="tb off" aria-label="Undo"><svg><use href="#undo"/></svg></button>
  <button class="more">»</button>
  <i class="grip grip-tight"></i>
  <button class="tb off" aria-label="Labels"><svg><use href="#abc"/></svg></button>
  <button class="more more-wide">»</button>
  <i class="grip grip-tight"></i>
  <button class="tb" aria-label="Python console"><svg><use href="#pycon"/></svg></button>
  <button class="tb" aria-label="Plugin"><svg><use href="#deer"/></svg></button>
  <button class="tb" aria-label="Freehand"><svg><use href="#adv"/></svg></button>
  <button class="tb" aria-label="Build"><svg><use href="#hammer"/></svg></button>
  <button class="tb drop" aria-label="Reload"><svg><use href="#reload"/></svg></button>
  <button class="tb" aria-label="WKT"><svg><use href="#wkt"/></svg></button>
  <button class="more more-wkt">»</button>
  <i class="grip grip-tight"></i>
  <button class="tb" aria-label="Help"><svg><use href="#help"/></svg></button>
  <i class="grip"></i>
</div>

<main class="main">
<aside class="left">
  <section class="dock browser">
    <div class="dockhead"><h2>Browser</h2><button aria-label="Float"><svg><use href="#float"/></svg></button><button aria-label="Close"><svg><use href="#close"/></svg></button></div>
    <div class="docktools">
      <button aria-label="Add layers"><svg><use href="#addlay"/></svg></button><button aria-label="Refresh"><svg><use href="#refresh"/></svg></button><button aria-label="Filter"><svg><use href="#funnel"/></svg></button><button aria-label="Collapse all"><svg><use href="#coll"/></svg></button><button aria-label="Properties"><svg><use href="#info"/></svg></button>
    </div>
    <div class="box browserbox">
      <ul class="tree">
        <li><b class="ar"></b><svg><use href="#star"/></svg>Favorites</li>
        <li class="l1"><b class="ar"></b><svg><use href="#folderopen"/></svg>C:\Users\ujaval\Downloa</li>
        <li class="l2"><b class="ar"></b><svg><use href="#db"/></svg>assam.gpkg</li>
        <li class="l3"><b></b><svg><use href="#poly"/></svg>boundary</li>
        <li class="l3"><b></b><svg><use href="#poly"/></svg>protected_regions</li>
        <li class="l3"><b></b><svg><use href="#line"/></svg>roads</li>
        <li class="l3"><b></b><svg><use href="#poly"/></svg>water_polygons</li>
        <li class="l3 hover"><b></b><svg><use href="#lineblue"/></svg>water_polylines</li>
        <li class="l2"><b></b><svg class="ras"><use href="#raster"/></svg>raster_protected_regi</li>
        <li class="l2"><b></b><svg class="ras"><use href="#raster"/></svg>raster_roads.tif</li>
        <li class="l2"><b></b><svg class="ras"><use href="#raster"/></svg>raster_water_polygon</li>
        <li class="l2"><b></b><svg class="ras"><use href="#raster"/></svg>raster_water_polylines</li>
        <li class="l1"><b class="ar shut"></b><svg><use href="#folder"/></svg>C:\Users\ujaval\Downloa</li>
        <li><b></b><svg class="ras faded"><use href="#raster"/></svg></li>
      </ul>
      <div class="vbar"><button class="sb up" aria-label="Scroll up"></button><i class="thumb thumb-browser"></i><button class="sb down" aria-label="Scroll down"></button></div>
      <div class="hbar"><button class="sb lf" aria-label="Scroll left"></button><i class="thumb"></i><button class="sb rt" aria-label="Scroll right"></button></div>
      <i class="corner"></i>
    </div>
  </section>
  <i class="hsplit"></i>
  <section class="dock layers">
    <div class="dockhead"><h2>Layers</h2><button aria-label="Float"><svg><use href="#float"/></svg></button><button aria-label="Close"><svg><use href="#close"/></svg></button></div>
    <div class="docktools">
      <button aria-label="Styling"><svg><use href="#brush"/></svg></button><button aria-label="Add group"><svg><use href="#group"/></svg></button><button aria-label="Themes"><svg><use href="#eye"/></svg></button><button aria-label="Filter"><svg><use href="#funnel"/></svg></button><button class="off drop" aria-label="Filter by expression"><svg><use href="#eps"/></svg></button><button aria-label="Expand all"><svg><use href="#expand"/></svg></button><button aria-label="Collapse all"><svg><use href="#coll"/></svg></button><button class="more">»</button>
    </div>
    <ul class="box tree layerlist">
      <li><b class="ar"></b><label><input type="checkbox" checked><svg class="ras"><use href="#raster"/></svg><u>raster_water_polygons</u></label></li>
      <li class="l1 val"><b></b><i class="sw black"></i>0</li>
      <li class="l1 val"><b></b><i class="sw none"></i>1</li>
      <li><b class="ar"></b><label><input type="checkbox" checked><svg class="ras"><use href="#raster"/></svg>raster_water_polylines</label></li>
      <li class="l1 val"><b></b><i class="sw black"></i>0</li>
      <li class="l1 val"><b></b><i class="sw none"></i>1</li>
      <li><b class="ar shut"></b><label><input type="checkbox" checked><svg class="ras"><use href="#raster"/></svg>raster_protected_regions</label></li>
      <li><b class="ar shut"></b><label><input type="checkbox" checked><svg class="ras"><use href="#raster"/></svg>raster_roads</label></li>
      <li><b></b><label><input type="checkbox" checked><i class="sw ln"></i>water_polylines</label></li>
      <li><b></b><label><input type="checkbox" checked><i class="sw water"></i>water_polygons</label></li>
      <li><b></b><label><input type="checkbox" checked><i class="sw green"></i>protected_regions</label></li>
      <li><b></b><label><input type="checkbox" checked><i class="sw ln road"></i>roads</label></li>
      <li><b></b><label><input type="checkbox" checked><i class="sw"></i>boundary</label></li>
    </ul>
  </section>
</aside>

<i class="vsplit"></i>
<svg class="map" viewBox="0 0 484 606" preserveAspectRatio="xMinYMin slice" role="img" aria-label="Map canvas">
<rect width="484" height="610" fill="#000"/>
<g fill="#fff" shape-rendering="crispEdges">
<path d="M0 302L27 308 58 310 62 307 100 305 127 301 143 298 150 294V284L146 280 147 275 158 262 170 256 180 253 193 247 207 244 208 240 199 237 193 232 191 224 195 214 205 202 215 195 232 189 259 175 285 164H316L332 171 352 176H373L394 168 405 159 413 151V137L409 136 411 124 421 110 428 92 435 81 444 72 449 83 461 87H484V209H478L467 220 459 232 450 235 437 237 425 236 423 223 414 221 399 229 384 235 372 241 359 240 322 246 302 248 285 256 270 261 250 261 237 263 230 268 200 285 190 287 182 300 167 321 158 328 140 337 133 335 127 331 97 332 92 330 72 329 50 331 27 333 0 337z"/>
<path d="M48 243l2-1v2l4 2 1-3 3 3 1 3 2 0v3l-2 2 1 4-3 2-1 4 2 2-1 4-3 2v2l-3 1-2 2-3-1-2 2-3-1-1-3-4-1-3-2-3 1-2-2 4-1-1-2 4-2 1-2 5-2 1-3-3-1 1-2-3-2 2-2 4 1 0-4 2 1 0-3h3z"/>
<path d="M30 279l2-1 4 2 2-1-1 5-4 3-2-4zM66 253h3l-1 4 4 2-1 5-2-2-2 2-1-3 1-4zM76 253h3v3h-2zM81 262l3-1 2 3-1 4-2-3-2-1zM85 271l4 1-1 2-3-1zM83 281h3v4h-3zM77 287h2v1h-2z"/>
<path d="M0 428q4-4 7-7t7-12l10-6-4 8-6 10 0 6 5 3 6-2 4 3-5 2 4 3 4-3v5l-7-1 4 7-2 5-4-3-5 4 2 5-4 4-3-7-3-5 4-7-8-5zM0 458l10 2 2 3 8-2 10 4 3-11h4v14l-3 5 4 5 3 7 5 2-6 3-3 1v4l-3-3-2-9-3-2-7 6H17l-4-5-6 2H0zM3 424l9-17 2 1-9 18zM28 394l4 5 1 0 2 4 4-5-2 6-7 4-1-6zM6 410l10-4v2l-9 4zM28 491h9v1h-9zM19 437l8 2 5 6-3 6-6-4z"/>
<path d="M2 405h3v1H2zM9 404h2v3H9zM16 402h3v1h-3zM23 406h1v2h-1zM31 411h2v2h-2zM26 418h1v3h-1zM18 418h4v1h-4zM26 429h5v1h-5zM30 434h1v3h-1zM34 441h1v3h-1zM10 443h2v5h-2zM23 428h2v2h-2zM38 470h2v6h-2zM36 476l6 8 4 1-5 3-4-5z"/>
<path d="M44 371l12-1 12-1 5-1v4H55l-2 2-1-3h-7v2zM26 370h2v4h-2zM34 366h2v1h-2zM39 368h1v2h-1zM89 371h2v2h-2zM99 361h2v1h-2zM104 363h2v1h-2zM71 336l2 2h-2zM137 346h2v2h-2zM67 300h3v2h-3zM97 298h2v2h-2zM107 295h1v1h-1zM131 293h1v2h-1zM66 350h1v1h-1zM43 380h1v2h-1zM60 393h3v1h-3zM49 393h1v1h-1zM66 378h1v1h-1zM39 413h1v2h-1z"/>
<path d="M193 334l12-18 3-4-1 5-12 18zM191 323l4-5v3l-4 5zM211 288h2v7h-2zM218 287h3v2h-3zM227 314l8-2v2l-7 2zM208 343h2v9h-2zM219 343l7 2h-5zM230 344h2v4h-2zM239 299h1v2h-1zM169 336h1v1h-1zM164 341h1v1h-1zM180 312h1v1h-1zM184 387h2v1h-2zM153 413h1v1h-1zM174 409h1v1h-1zM183 410h1v1h-1zM240 419h1v1h-1zM217 430h3v2h-3zM178 442h1v2h-1zM108 454l4 4-1 0zM114 477h1v4h-1zM112 484h1v8h-1zM111 497h2v10h-2zM105 481h2v1h-2zM139 484h1v1h-1zM153 479h1v2h-1zM191 507h3v2h-3zM123 506h1v1h-1zM130 477h1v1h-1z"/>
<path d="M44 461h2v2h-2zM48 448h1v1h-1zM53 465h1v1h-1zM60 467h2v1h-2zM59 475h4l2 3h-4zM70 477h2v3h-2zM74 476h1v1h-1zM61 487h1v1h-1zM65 499h1v2h-1zM70 497h2v1h-2zM57 473h1v2h-1zM50 462h2v1h-2zM273 22h3v1h-3zM272 24h2v1h-2zM279 21h3v1h-3zM277 25h4v1h-4zM283 23h1v2h-1zM287 56h1v1h-1zM285 58h1v3h-1zM284 60h1v1h-1zM424 278h2v2h-2zM423 281h1v2h-1zM371 332h1v3h-1zM400 330h1v1h-1zM354 460h1v1h-1zM309 358h1v3h-1zM318 382h1v1h-1zM346 437h1v2h-1zM360 439h2v1h-2zM382 374h1v1h-1zM254 395h1v2h-1zM411 500h1v1h-1z"/>
<path d="M211 157l1-5 5-4 2-4 5-3 4-3 8-3 3-5 3-5 8-7" fill="none" stroke="#fff" stroke-dasharray="6 1"/>
</g>
<g fill="#000" shape-rendering="crispEdges">
<path d="M219 232L220 225 224 217 232 210 240 208 240 213 236 220 235 226 227 230zM329 231L333 225 345 214 359 206 382 199 402 200 405 198 415 195 418 202V212L415 215 389 219 365 226 352 228 342 227zM426 222L441 220 453 219 452 229 447 233 439 235 428 231z"/>
<path d="M195 269h4v2h-4zM196 275h3v2h-3zM192 281h2v1h-2zM5 435h6l1 6 4 1v8l-5 4-5-2zM17 447h3v3h-3zM24 455h3v3h-3zM15 427h3v3h-3zM8 425h4v1H8zM50 264h4v2h-4zM55 257h5v1h-5zM40 266l5 2-3 1z"/>
<path d="M5 421h2v1H5zM12 417l6-8 1 1-5 8zM12 433h2v3h-2zM19 434h3v1h-3zM22 440h1v4h-1zM27 443h3v1h-3zM14 453h1v5h-1zM20 451h2v4h-2zM26 437h2v1h-2zM29 460h2v1h-2zM17 440h2v3h-2zM33 468h2v1h-2zM31 472h2v1h-2z"/>
</g>
</svg>

<i class="vsplit"></i>
<aside class="right dock">
  <div class="dockhead"><h2>Processing Toolbox</h2><button aria-label="Float"><svg><use href="#float"/></svg></button><button aria-label="Close"><svg><use href="#close"/></svg></button></div>
  <div class="docktools">
    <button aria-label="Models"><svg class="i18"><use href="#gears"/></svg></button><button aria-label="Scripts"><svg class="i18"><use href="#pymenu"/></svg></button><button aria-label="History"><svg><use href="#clock"/></svg></button><button aria-label="Results"><svg class="soft"><use href="#doc"/></svg></button><i class="vsep"></i><button class="off" aria-label="Edit in place"><svg><use href="#editb"/></svg></button><i class="vsep"></i><button aria-label="Options"><svg class="i18"><use href="#wrench"/></svg></button>
  </div>
  <div class="search"><svg class="i16"><use href="#lens"/></svg><input type="text" value="calcul" aria-label="Search"><button aria-label="Clear"><svg viewBox="0 0 13 10"><path d="M4 0h9v10H4L0 5z" fill="#888"/><path d="M5.500 2.500l5 5M10.500 2.500l-5 5" stroke="#fff" stroke-width="1.300"/></svg></button></div>
  <div class="box toolbox">
    <ul class="tree">
      <li><b class="ar"></b><svg><use href="#qgis"/></svg>Raster analysis</li>
      <li class="l1"><b></b><svg><use href="#minigear"/></svg>Raster boolean AND</li>
      <li class="l1"><b></b><svg><use href="#minigear"/></svg>Raster boolean OR</li>
      <li class="l1 sel"><b></b><svg><use href="#gearsel"/></svg>Raster calculator<i class="callout"></i><svg class="pointer"><use href="#arrowcur"/></svg></li>
      <li class="l1"><b></b><svg><use href="#minigear"/></svg>Raster layer zonal statistics</li>
      <li class="l1"><b></b><svg><use href="#minigear"/></svg>Raster surface volume</li>
      <li class="l1"><b></b><svg><use href="#minigear"/></svg>Reclassify by layer</li>
      <li class="l1"><b></b><svg><use href="#minigear"/></svg>Reclassify by table</li>
      <li><b class="ar"></b><svg><use href="#qgis"/></svg>Vector analysis</li>
      <li class="l1"><b></b><svg><use href="#overlap"/></svg>Overlap analysis</li>
      <li><b class="ar"></b><svg><use href="#qgis"/></svg>Vector table</li>
      <li class="l1"><b></b><svg><use href="#minigear"/></svg>Advanced Python field calculator</li>
      <li class="l1"><b></b><svg><use href="#minigear"/></svg>Field calculator</li>
      <li><b class="ar"></b><svg><use href="#gdal"/></svg>GDAL</li>
      <li class="l1 grp"><b class="ar"></b>Raster miscellaneous</li>
      <li class="l2"><b></b><svg><use href="#gdal"/></svg>Raster calculator</li>
      <li><b class="ar"></b><svg><use href="#grass"/></svg>GRASS</li>
      <li class="l1 grp"><b class="ar"></b>Imagery (i.*)</li>
      <li class="l2"><b></b><svg><use href="#grass"/></svg>i.aster.toar</li>
      <li class="l2"><b></b><svg><use href="#grass"/></svg>i.biomass</li>
      <li class="l2"><b></b><svg><use href="#grass"/></svg>i.evapo.mh</li>
      <li class="l2"><b></b><svg><use href="#grass"/></svg>i.evapo.pm</li>
      <li class="l2"><b></b><svg><use href="#grass"/></svg>i.evapo.pt</li>
      <li class="l2"><b></b><svg><use href="#grass"/></svg>i.landsat.toar</li>
      <li class="l2"><b></b><svg><use href="#grass"/></svg>i.oif</li>
      <li class="l2"><b></b><svg><use href="#grass"/></svg>i.vi</li>
      <li class="l1 grp"><b class="ar"></b>Raster (r.*)</li>
      <li class="l2"><b></b><svg><use href="#grass"/></svg>r.geomorphon</li>
      <li class="l2"><b></b><svg><use href="#grass"/></svg>r.gwflow</li>
      <li class="l2"><b></b><svg><use href="#grass"/></svg>r.kappa</li>
    </ul>
    <div class="vbar"><button class="sb up" aria-label="Scroll up"></button><i class="thumb thumb-tools"></i><button class="sb down" aria-label="Scroll down"></button></div>
  </div>
</aside>
</main>

<footer class="status">
  <div class="field locate"><svg class="i16"><use href="#lens"/></svg><input type="text" placeholder="Type to locate (Ctrl+K)" aria-label="Locate"></div>
  <label class="lb-coord" for="coord">oordinat</label><input class="field coord" id="coord" type="text" value="385345,2890868">
  <button class="plain" aria-label="Extents"><svg class="i18"><use href="#mouse"/></svg></button>
  <label class="lb-scale" for="scale">cal</label>
  <div class="field combo"><select id="scale"><option>1:167057</option></select></div>
  <button class="plain lock" aria-label="Lock scale"><svg class="i16"><use href="#lock"/></svg></button>
  <label class="lb-mag" for="mag">lagnifie</label>
  <div class="field spin mag"><input id="mag" type="text" value="100%"><span class="steps"><button aria-label="Increase"></button><button aria-label="Decrease"></button></span></div>
  <label class="lb-rot" for="rot">otatio</label>
  <div class="field spin rot"><input id="rot" type="text" value="0.0 °"><span class="steps"><button aria-label="Increase"></button><button aria-label="Decrease"></button></span></div>
  <label class="render"><input type="checkbox" checked>Render</label>
  <button class="plain crs"><svg class="i16"><use href="#crs"/></svg>EPSG:32646</button>
  <button class="plain chat" aria-label="Messages"><svg class="i16"><use href="#chat"/></svg></button>
</footer>
</div>
</div>
</body>
</html>
```
FILE: styles.css
```css
* { box-sizing: border-box; }
body { margin: 0; font: 12px/16px Roboto, "Open Sans", sans-serif; color: #000; background: #dfe6ee; }
button, input, select { font: inherit; color: inherit; margin: 0; }
button { background: none; border: 0; padding: 0; }
i { font-style: normal; }
ul { list-style: none; margin: 0; padding: 0; }
h1, h2 { margin: 0; font: inherit; }
.defs { position: absolute; }
.i16 { width: 16px; height: 16px; flex: none; }

.window {
  height: 100vh; display: flex; flex-direction: column; padding: 0 6px 7px;
  border: 1px solid #1d2733; border-radius: 7px;
  background: linear-gradient(115deg, #d3e5f8 0, #c1dbf5 12%, #b1d1f2 24%, #a3c5ea 32%, #b9d9fa 42%, #bbdcfc 66%, #a5c8ec 73%, #c5e0fb 80%, #d5e9fd 100%);
  box-shadow: inset 0 0 0 1px #eef6ff;
}
.titlebar { height: 28px; flex: none; display: flex; align-items: center; gap: 5px; padding-left: 1px; }
.titlebar > .i16 { margin-top: 2px; }
.title { flex: 1; }
.winbtns { display: flex; align-self: flex-start; border: 1px solid #56677a; border-top: 0; border-radius: 0 0 5px 5px; overflow: hidden; }
.wb { width: 27px; height: 18px; display: flex; align-items: center; justify-content: center; background: linear-gradient(#dfebf7, #b9cbdf 48%, #9fb5cc 50%, #c3d8ee); border-right: 1px solid #56677a; }
.wb svg { width: 13px; height: 11px; }
.wb-close { width: 47px; border: 0; background: linear-gradient(#e6a797, #cf6a56 48%, #b8351e 50%, #d9704e); }

.client { flex: 1; min-height: 0; display: flex; flex-direction: column; background: #f0f0f0; border: 1px solid #59687a; }
.menubar { height: 20px; flex: none; display: flex; align-items: center; gap: 1px; padding-left: 4px; border-bottom: 1px solid #d4d4d4; }
.menubar button { padding: 0 6px; white-space: nowrap; }
.toolbar { height: 39px; flex: none; display: flex; align-items: center; background: linear-gradient(#fafafa, #eeeeee); border-bottom: 1px solid #b4b4b4; }
.tb { width: 33px; height: 32px; flex: none; display: flex; align-items: center; justify-content: center; }
.tb svg { width: 24px; height: 24px; flex: none; }
.off svg { opacity: .3; filter: grayscale(.5); }
.on { border: 1px solid #a8a8a8; border-radius: 3px; background: #dcdcdc; }
.drop::after { content: ""; border: 4px solid transparent; border-top: 5px solid #555; border-bottom: 0; margin-left: 6px; flex: none; }
.tb.drop { width: 45px; padding-left: 4px; justify-content: flex-start; }
.off.drop::after { opacity: .6; }
.grip { width: 16px; height: 18px; flex: none; background: radial-gradient(circle, #a9a9a9 32%, transparent 40%) 8px 0 / 3px 3px repeat; background-clip: content-box; padding: 0 3px 0 8px; }
.grip-first { width: 13px; padding: 0 4px 0 4px; background-position: 1px 0; }
.grip-tight { width: 10px; padding: 0 3px 0 2px; }
.vsep { width: 7px; height: 18px; flex: none; background: linear-gradient(#cfcfcf, #cfcfcf) 2px 0 / 1px 100% no-repeat; }
.more { width: 23px; flex: none; font: 600 15px/16px "Open Sans", sans-serif; }
.toolbar .more-wide { width: 29px; padding-left: 6px; }
.toolbar .more-wkt { width: 33px; padding-left: 6px; }

.main { flex: 1; min-height: 0; display: grid; grid-template-columns: 213px 7px minmax(0, 1fr) 7px 309px; }
.left { display: flex; flex-direction: column; min-height: 0; min-width: 0; }
.map { width: 100%; height: 100%; display: block; min-height: 0; }
.vsplit { background: repeating-linear-gradient(#bbb 0 1px, transparent 1px 3px) 3px 50% / 1px 18px no-repeat; }
.hsplit { height: 4px; flex: none; align-self: center; width: 18px; background: radial-gradient(circle, #aaa 32%, transparent 40%) 0 0 / 3px 3px repeat-x; }
.dock { display: flex; flex-direction: column; min-height: 0; min-width: 0; }
.browser { height: 306px; flex: none; }
.layers { flex: 1; }
.dockhead { height: 20px; flex: none; display: flex; align-items: center; gap: 2px; padding: 0 2px 0 4px; }
.layers .dockhead { height: 22px; }
.dockhead h2 { flex: 1; }
.dockhead button, .dockhead svg { width: 12px; height: 12px; display: block; }
.docktools { height: 28px; flex: none; display: flex; align-items: center; padding-left: 3px; margin-bottom: 3px; }
.layers .docktools { height: 26px; }
.docktools button { width: 25px; height: 24px; display: flex; align-items: center; justify-content: center; flex: none; }
.docktools svg { width: 16px; height: 16px; flex: none; }
.docktools .drop { width: 38px; }
.docktools .drop::after { margin-left: 5px; }
.docktools .more { width: 24px; }
.docktools .vsep { width: 3px; margin: 0 2px; background-position: 1px 0; }
.docktools .i18, .i18 { width: 18px; height: 18px; }
.soft { opacity: .7; }

.box { background: #fff; border: 1px solid #b4b4b4; min-height: 0; overflow: hidden; }
.browserbox { flex: 1; display: grid; grid-template: minmax(0, 1fr) 15px / minmax(0, 1fr) 14px; }
.browserbox .tree, .toolbox .tree { overflow: hidden; }
.tree li { height: 18px; display: flex; align-items: center; white-space: nowrap; position: relative; }
.tree b { width: 20px; flex: none; display: flex; justify-content: center; }
.ar::before { content: ""; border: 4px solid transparent; border-top: 5px solid #555; border-bottom: 0; }
.shut::before { border: 4px solid transparent; border-left: 5px solid #555; border-right: 0; }
.tree svg { width: 16px; height: 16px; flex: none; margin: 0 6px 0 3px; }
.tree .ras { width: 14px; height: 14px; margin: 0 7px 0 4px; }
.faded { opacity: .6; }
.l1 { padding-left: 20px; }
.l2 { padding-left: 40px; }
.l3 { padding-left: 60px; }
.hover { background: #efefef; }
.vbar { display: flex; flex-direction: column; background: #e4e4e4; border-left: 1px solid #c0c0c0; }
.hbar { display: flex; background: #e4e4e4; border-top: 1px solid #c0c0c0; }
.corner { background: #f0f0f0; border-top: 1px solid #c0c0c0; border-left: 1px solid #c0c0c0; }
.sb { width: 13px; height: 14px; flex: none; background: #fbfbfb; border-bottom: 1px solid #c0c0c0; display: flex; align-items: center; justify-content: center; }
.sb::before { content: ""; border: 4px solid transparent; }
.up::before { border-bottom: 5px solid #555; border-top: 0; }
.down::before { border-top: 5px solid #555; border-bottom: 0; }
.lf::before { border-right: 5px solid #555; border-left: 0; }
.rt::before { border-left: 5px solid #555; border-right: 0; }
.down { margin-top: auto; border-bottom: 0; border-top: 1px solid #c0c0c0; }
.lf, .rt { border: 0; border-right: 1px solid #c0c0c0; }
.rt { margin-left: auto; border-right: 0; border-left: 1px solid #c0c0c0; }
.thumb { background: linear-gradient(90deg, #fff, #f1f1f1); border-bottom: 1px solid #b8b8b8; }
.thumb-browser { height: 86px; }
.thumb-tools { height: 152px; }
.hbar .thumb { width: 114px; border: 0; border-right: 1px solid #b8b8b8; background: linear-gradient(#fff, #f1f1f1); }

.layerlist { flex: 1; font: 700 11px/16px "Open Sans", "Noto Sans", sans-serif; }
.layerlist li:not(.val) { background: linear-gradient(#e0e0e0, #e0e0e0) right 1px center / 3px 16px no-repeat; }
.layerlist label { display: flex; align-items: center; }
.layerlist .val { font: 400 12px/16px Roboto, sans-serif; }
.sw { width: 16px; height: 16px; border: 1px solid #777; margin: 0 6px 0 3px; flex: none; }
.black { background: #000; border-color: #000; }
.none { border-color: transparent; }
.water { background: #a6cee3; }
.green { background: #b2df8a; }
.ln { border: 0; background: linear-gradient(#3d84b8, #3d84b8) center / 16px 1px no-repeat; }
.ln.road { background-image: linear-gradient(#cfb23c, #cfb23c); }
input[type="checkbox"] { appearance: none; width: 14px; height: 14px; flex: none; margin: 0 3px; border: 1px solid #a8a8a8; border-radius: 1px; background: #fff; display: grid; place-items: center; }
input[type="checkbox"]:checked::before { content: ""; width: 10px; height: 10px; background: #000; clip-path: polygon(4% 50%, 22% 42%, 38% 66%, 76% 0, 92% 0, 46% 100%, 32% 100%); }

.search { height: 22px; flex: none; display: flex; align-items: center; gap: 5px; padding: 0 7px; background: #fff; border: 1px solid #b0b0b0; border-radius: 3px; }
.search input { flex: 1; min-width: 0; border: 0; padding: 0; outline: 0; background: none; }
.search .i16 { width: 14px; height: 14px; margin-right: 2px; }
.search button svg { width: 13px; height: 10px; display: block; }
.toolbox { flex: 1; display: grid; grid-template-columns: minmax(0, 1fr) 14px; }
.toolbox .grp { height: 15px; }
.toolbox .grp b { margin-right: 3px; }
.tree .sel { background: #3a95f7; color: #fff; overflow: visible; z-index: 1; }
.callout { position: absolute; left: 37px; top: -4px; width: 126px; height: 24px; border: 2px solid #dc1414; }
.tree .pointer { position: absolute; left: 92px; top: 19px; width: 14px; height: 18px; margin: 0; }

.status { height: 28px; flex: none; display: flex; align-items: center; padding: 0 4px; white-space: nowrap; }
.field { height: 22px; border: 1px solid #ababab; border-radius: 3px; background: #fff; flex: none; }
.field input, .field select { border: 0; outline: 0; background: none; min-width: 0; padding: 0 0 0 5px; }
.locate { width: 200px; display: flex; align-items: center; padding: 0 8px; }
.locate .i16 { width: 14px; height: 14px; }
.locate ::placeholder { color: #777; opacity: 1; }
.status label { flex: none; }
.lb-coord, .lb-mag, .lb-rot { font-size: 11px; }
.lb-coord { width: 44px; margin-left: 37px; }
.coord { width: 97px; padding: 0 0 0 6px; font-size: 11px; }
.plain { display: flex; align-items: center; gap: 3px; margin-left: 3px; flex: none; }
.lb-scale { width: 18px; margin-left: 10px; }
.combo { width: 80px; position: relative; }
.combo select { appearance: none; width: 100%; height: 20px; padding-left: 4px; background: linear-gradient(#fafafa, #ededed) right / 19px 100% no-repeat; }
.combo::after { content: ""; position: absolute; right: 5px; top: 8px; border: 4px solid transparent; border-top: 5px solid #555; border-bottom: 0; pointer-events: none; }
.combo::before { content: ""; position: absolute; right: 19px; top: 0; height: 20px; border-left: 1px solid #c0c0c0; }
.lock { margin: 0 6px 0 11px; }
.lb-mag { width: 36px; }
.spin { display: flex; }
.spin input { flex: 1; }
.steps { width: 14px; display: flex; flex-direction: column; justify-content: center; gap: 3px; align-items: center; border-left: 1px solid #c0c0c0; }
.steps button { border: 4px solid transparent; border-bottom: 5px solid #555; border-top: 0; }
.steps button + button { border-top: 5px solid #555; border-bottom: 0; }
.mag { width: 87px; }
.lb-rot { width: 37px; margin-left: 10px; }
.rot { width: 84px; }
.render { width: 60px; display: flex; align-items: center; gap: 1px; margin-left: 3px; }
.crs { margin-left: 14px; font-size: 11px; }
.chat { margin: 0 25px 0 auto; }
```
